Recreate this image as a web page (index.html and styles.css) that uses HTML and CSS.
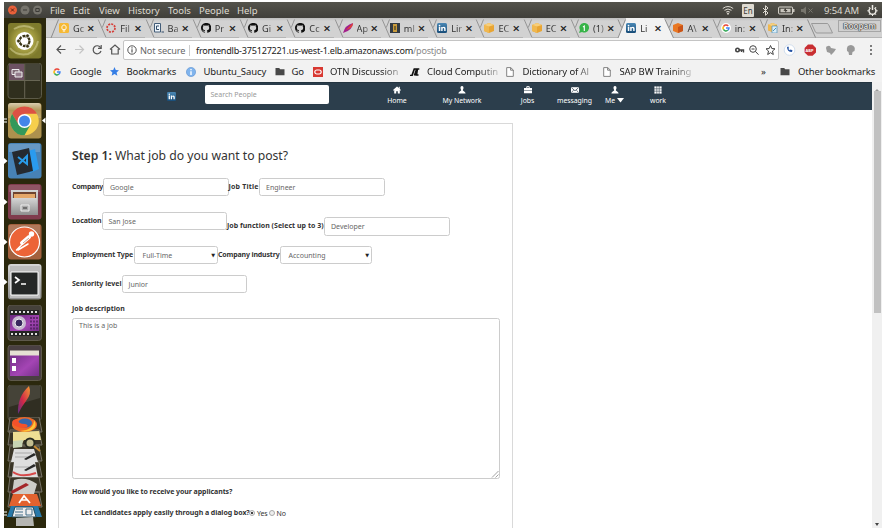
FILE: index.html
```
<!DOCTYPE html>
<html lang="en">
<head>
<meta charset="utf-8">
<title>Post a job</title>
<link rel="stylesheet" href="styles.css">
</head>
<body>
<svg class="defs" width="0" height="0">
  <defs>
    <linearGradient id="gloss" x1="0" y1="0" x2="0" y2="1"><stop offset="0" stop-color="#fff" stop-opacity=".55"/><stop offset=".5" stop-color="#fff" stop-opacity=".05"/><stop offset="1" stop-color="#fff" stop-opacity=".2"/></linearGradient>
    <linearGradient id="silver" x1="0" y1="0" x2="0" y2="1"><stop offset="0" stop-color="#d5d5d5"/><stop offset="1" stop-color="#8e8e8e"/></linearGradient>
    <linearGradient id="purple" x1="0" y1="0" x2="1" y2="1"><stop offset="0" stop-color="#6c2a80"/><stop offset=".6" stop-color="#a445b4"/><stop offset="1" stop-color="#75308a"/></linearGradient>
    <linearGradient id="feather" x1="0" y1="1" x2="1" y2="0"><stop offset="0" stop-color="#5c2f86"/><stop offset=".45" stop-color="#d32847"/><stop offset="1" stop-color="#f39b35"/></linearGradient>
    <linearGradient id="blue" x1="0" y1="0" x2="0" y2="1"><stop offset="0" stop-color="#4a88b5"/><stop offset="1" stop-color="#174c78"/></linearGradient>
    <radialGradient id="olive"><stop offset="0" stop-color="#c8c47a"/><stop offset=".6" stop-color="#a29b41"/><stop offset="1" stop-color="#7e7a2c"/></radialGradient>
    <symbol id="git" viewBox="0 0 16 16"><path fill="#111" d="M8 0C3.58 0 0 3.58 0 8c0 3.54 2.29 6.53 5.47 7.59.4.07.55-.17.55-.38v-1.49c-2.01.37-2.53-.49-2.69-.94-.36-.8-.72-.92-.9-1.1-.3-.28-.1-.55.28-.5.63.08.9.6 1.23 1.02.6 1 1.6.8 2.1.55.08-.52.28-.87.51-1.07-1.78-.2-3.64-.89-3.64-3.95 0-.87.31-1.59.82-2.15-.08-.2-.36-1.02.08-2.12 0 0 .67-.21 2.2.82a7.6 7.6 0 0 1 4 0c1.53-1.04 2.2-.82 2.2-.82.44 1.1.16 1.92.08 2.12.51.56.82 1.27.82 2.15 0 3.07-1.87 3.75-3.65 3.95.29.25.54.73.54 1.48v2.2c0 .21.15.46.55.38A8 8 0 0 0 8 0z"/></symbol>
    <symbol id="in" viewBox="0 0 10 10"><rect width="10" height="10" rx="1.5" fill="url(#blue)"/><path d="M1.8 4v4h1.5V4zM4.2 4v4h1.4V6q0-1 .8-1t.8 1v2h1.4V5.6Q8.600 3.800 7 3.800q-1 0-1.400.8V4z" fill="#fff"/><circle cx="2.550" cy="2.600" r=".85" fill="#fff"/></symbol>
    <symbol id="cube" viewBox="0 0 10 10"><path d="M0 2 5 0l5 2v6L5 10 0 8z" fill="#e8a534"/><path d="M0 2 5 3.500V10L0 8z" fill="#f0b850"/><path d="M0 2 5 0l5 2-5 1.500z" fill="#f7cf7c"/></symbol>
    <symbol id="g" viewBox="0 0 20 20" fill="none" stroke-width="3.800"><path d="M15.500 5A7.400 7.400 0 0 0 3.700 6.300" stroke="#ea4335"/><path d="M3.700 6.300a7.400 7.400 0 0 0 0 7.400" stroke="#fbbc05"/><path d="M3.700 13.700a7.400 7.400 0 0 0 11 2" stroke="#34a853"/><path d="M14.700 15.700A7.400 7.400 0 0 0 17.400 10H10" stroke="#4285f4"/></symbol>
    <symbol id="slant" viewBox="0 0 11 20"><path d="M1.500 2.500 9.500 20H0V2.500z" fill="#d2d2d2"/><path d="M1.200 1.500 5.300 11 9 19.500M8.500 1.500 5.300 9.500" fill="none" stroke="#8d8d8d" stroke-width=".9"/></symbol>
    <symbol id="page" viewBox="0 0 8 10"><path d="M.7.6h4L7.300 3v6.400H.7zM4.600.6V3.200h2.700" fill="#fff" stroke="#777" stroke-width=".9"/></symbol>
    <symbol id="folder" viewBox="0 0 10 9"><path d="M.5 1h3.700l1 1.200h4.300v6H.5z" fill="#484848"/></symbol>
    <symbol id="person" viewBox="0 0 10 10"><path d="M5 0C3.300 0 3 1.200 3.200 2.800c.1 1.200.7 1.700.8 2.500C4 6.500.8 6.500.5 9.500h9C9.200 6.500 6 6.500 6 5.300c.1-.8.700-1.300.8-2.500C7 1.200 6.700 0 5 0z" fill="#fff"/></symbol>
  </defs>
</svg>
<div class="desktop">
  <header class="menubar">
    <svg class="winbtns" width="44" height="16" viewBox="0 0 44 16"><circle cx="8.500" cy="8" r="4.500" fill="#e8603a"/><path d="m7 6.500 3 3m0-3-3 3" stroke="#5b2415"/><circle cx="21" cy="8" r="4.500" fill="#76746c"/><path d="M19 8h4" stroke="#3c3b37"/><circle cx="33.500" cy="8" r="4.500" fill="#76746c"/><path d="M31.800 6.500h3.400v3h-3.400z" fill="none" stroke="#3c3b37"/></svg>
    <nav class="menus"><span class="m1">File</span><span class="m2">Edit</span><span class="m3">View</span><span class="m4">History</span><span class="m5">Tools</span><span class="m6">People</span><span>Help</span></nav>
    <div class="tray">
      <svg width="12" height="10" viewBox="0 0 12 10" fill="none" stroke="#dedbd3"><path d="M.8 3.500q5.200-4 10.400 0M2.500 5.300q3.500-2.600 7 0M4.200 7.100q1.800-1.300 3.600 0"/><circle cx="6" cy="8.700" r=".6" fill="#dedbd3"/></svg>
      <b class="lang">En</b>
      <svg class="bt" width="7" height="11" viewBox="0 0 7 11"><path d="m1 3 5 5-2.500 2.300V.7L6 3 1 8" fill="none" stroke="#dedbd3"/></svg>
      <svg class="bat" width="17" height="9" viewBox="0 0 17 9"><rect x=".6" y="1" width="14" height="7" rx="1" fill="none" stroke="#dedbd3"/><path d="M2.500 2.800h10v3.400h-10zM15 3h1.500v3H15z" fill="#c9c6be"/><path d="m7.500 2-2 2.800h2L7 7l2.500-3H8z" fill="#33312c"/></svg>
      <svg class="vol" width="12" height="9" viewBox="0 0 12 9"><path d="M0 3h2l3-2.500v8L2 6H0z" fill="#77756d"/><path d="m7.500 2.500 4 4m0-4-4 4" stroke="#77756d"/></svg>
      <span class="clock">9:54 AM</span>
      <svg class="gear" width="11" height="11" viewBox="0 0 11 11" fill="none" stroke="#eeece6"><path d="M3.500 3a3.500 3.500 0 1 0 4 0M5.500 0v5" stroke-width="1.500"/><path d="M.3 5.800h1.500m7.400 0h1.500M1.800 2l1 1m6.400-1-1 1M2 9.800l1-1m6 1-1-1M5.500 9.500V11"/></svg>
    </div>
  </header>
  <div class="main">
    <aside class="dock">
      <svg class="tile" viewBox="0 0 42 36"><rect x="4" width="33.500" height="35.500" rx="3" fill="url(#olive)"/><path d="M6 25Q12 33 24 31Q32 28 34 18M10 6Q20 0 30 6" stroke="#ddd9a2" stroke-width="2" fill="none" opacity=".5"/><circle cx="20.500" cy="18" r="9" fill="#fff"/><circle cx="20.500" cy="18" r="5" fill="none" stroke="#3a3516" stroke-width="2.300" stroke-dasharray="9.300 1.170"/><g fill="#3a3516" stroke="#fff" stroke-width=".7"><circle cx="14.500" cy="18" r="1.900"/><circle cx="23.500" cy="12.800" r="1.900"/><circle cx="23.500" cy="23.200" r="1.900"/></g></svg>
      <svg class="tile" viewBox="0 0 42 36"><rect x="4" width="33.500" height="35.500" rx="3" fill="#302f1e" stroke="#5c5a48"/><path d="M5 1h15v16H5z" fill="#6d5262"/><path d="M21 1h15v16H21z" fill="#454438"/><path d="M20.700 1v34M5 17.500h31" stroke="#686654"/><path d="M8 6.500h7v5H8z" fill="#806b76" stroke="#eee"/><path d="M11 9h7v5h-7z" fill="#967e8e" stroke="#eee"/></svg>
      <svg class="tile" viewBox="0 0 42 36"><rect x="4" width="33.500" height="35.500" rx="3" fill="#ad914e"/><path d="M4 3q0-3 3-3h27q3 0 3 3v12H4z" fill="url(#gloss)"/><circle cx="20.500" cy="18" r="14.300" fill="#f6cf4c"/><path d="M8.100 10.800A14.300 14.300 0 0 1 32.900 10.800H20.500L14.300 21.600z" fill="#dc5144"/><path d="M8.100 10.800 14.500 21.600 26.600 21.600 20.500 32.300A14.300 14.300 0 0 1 8.100 10.800z" fill="#34985a"/><circle cx="20.500" cy="18" r="7" fill="#fff"/><circle cx="20.500" cy="18" r="5.500" fill="#4285e8"/><path d="M0 16h3M0 19h3" stroke="#fff"/><path d="m41.500 14.500-3.500 3 3.500 3z" fill="#fff"/></svg>
      <svg class="tile" viewBox="0 0 42 36"><rect x="4" width="33.500" height="35.500" rx="3" fill="#4782b5"/><path d="M5 1h31v8H5z" fill="#fff" opacity=".18"/><path d="m24 8 7-2 4 20-9 4z" fill="#2a9bee"/><path d="m8 9 17-4 4 23-16 4z" fill="#252a30"/><path d="m14 14 9 7v-8l-8 8" fill="none" stroke="#299be8" stroke-width="2"/><path d="m0 15 3.500 3L0 21z" fill="#fff"/></svg>
      <svg class="tile" viewBox="0 0 42 36"><rect x="4" width="33.500" height="35.500" rx="3" fill="#803c4d"/><path d="M5 1h31v7H5z" fill="#fff" opacity=".13"/><path d="M7 6h27v25H7z" fill="url(#silver)"/><path d="M9 8h23v7H9z" fill="#6f4430"/><path d="M10 10h21v5H10z" fill="#e4a769"/><path d="M8 14h25v17H8z" fill="url(#silver)"/><path d="M17 21h8v6h-8z" fill="#aaa" stroke="#eee"/><path d="M19 24h4" stroke="#333"/><path d="m0 15 3.500 3L0 21z" fill="#fff"/></svg>
      <svg class="tile" viewBox="0 0 42 36"><rect x="4" width="33.500" height="35.500" rx="3" fill="#a3613e"/><path d="M5 1h31v9H5z" fill="#fff" opacity=".15"/><circle cx="20.500" cy="18" r="15" fill="#ec6437" stroke="#fff" stroke-width="1.200"/><path d="m18 19 7-6" stroke="#fff" stroke-width="4" stroke-linecap="round"/><path d="m12.500 26 7-7M14 26l10-6" stroke="#fff" stroke-width="1.500" stroke-linecap="round"/><circle cx="27.500" cy="10" r="2.700" fill="#fff"/><path d="m19 19 6-5" stroke="#c9a394"/><path d="m0 15 3.500 3L0 21z" fill="#fff"/></svg>
      <svg class="tile" viewBox="0 0 42 36"><rect x="4" width="33.500" height="35.500" rx="3" fill="url(#silver)"/><path d="M6 2h30v32H6z" fill="#bcbcbc"/><path d="M7 8h27v23H7z" fill="#252827" stroke="#fff"/><path d="m11 13 4 3-4 3M17 20h5" fill="none" stroke="#fff" stroke-width="1.700"/><path d="m0 15 3.500 3L0 21z" fill="#fff"/></svg>
      <svg class="tile" viewBox="0 0 42 36"><rect x="4" width="33.500" height="35.500" rx="3" fill="#45413a" stroke="#5e594b"/><path d="M6 5h29v26H6z" fill="#232323"/><path d="M7 7h27M7 29h27" stroke="#ddd" stroke-width="2" stroke-dasharray="2 2"/><path d="M6 10h29v16H6z" fill="url(#purple)"/><circle cx="15" cy="18" r="7" fill="#c7b7cf"/><circle cx="15" cy="18" r="4" fill="#39285d" stroke="#eee"/><path d="M27 12v13m3-13v13m3-13v13" stroke="#4d1e5c" stroke-dasharray="2 1.500" stroke-width="1.500"/></svg>
      <svg class="tile" viewBox="0 0 42 36"><rect x="4" width="33.500" height="35.500" rx="3" fill="#493f41" stroke="#5e594b"/><path d="M6 6h29v25H6z" fill="url(#purple)"/><path d="M6 5.500h29v5H6z" fill="#e5e0d3"/><path d="M8 13h4v5H8zM8 21h4v5H8z" fill="#fff"/></svg>
      <svg class="tile" viewBox="0 0 42 36"><rect x="4" width="33.500" height="35.500" rx="3" fill="#302e22" stroke="#504f3e"/><path d="M5 1h31v12L5 22z" fill="#fff" opacity=".1"/><path d="M14 29Q13 12 25 1q3 8-3 15-4 5-8 13z" fill="url(#feather)"/></svg>
      <svg class="stack" viewBox="0 0 42 109"><g stroke="#777366" fill="#3a3527"><path d="M6 0h29l3 15H4zM6 13h29l3 15H4zM6 29h29l3 15H4zM6 45h29l3 15H4zM6 60h29l3 15H4zM6 75h29l3 15H4z"/></g><path d="m9 15 26-1 2 9H20l-3 5-8-1z" fill="#efdf94"/><ellipse cx="20.500" cy="7.500" rx="12.500" ry="7.500" fill="#ee6828"/><ellipse cx="21" cy="6" rx="7" ry="4.500" fill="#3467ac"/><path d="M8 5q2-4 6-2 0 4 7 4 4 1 2 3-5 2-9 0Q9 9 8 5z" fill="#f3522b"/><path d="M30 3q4 6-2 10-6 3-12 1 14-1 14-11z" fill="#ffc536"/><path d="m9 24 10-1-1 7-9 1z" fill="#c7d4b3"/><circle cx="26" cy="26" r="4.500" fill="#c3bd90" stroke="#292c21" stroke-width="2"/><path d="m30 29 6 5" stroke="#c38a35" stroke-width="2"/><path d="M10 32h20l4 13H7zM10 45h21l3 15H8z" fill="#dedede"/><path d="M11 36h17M11 40h15M11 50h14" stroke="#aaa"/><path d="m20 42 10-6 2 2-10 5zM20 53l10-6 2 2-10 5z" fill="#292929"/><path d="M9 55q8 6 23 1" fill="none" stroke="#d64848" stroke-width="2"/><path d="M10 63q12-4 23 4l-3 10H8z" fill="#cdccc8"/><path d="m7 74 15-8 3 2-17 9z" fill="#a42629"/><path d="M9 77h24l4 12H5z" fill="#e2622f"/><path d="m15 86 5-7 6 7m-9-3h7" stroke="#fff" fill="none" stroke-width="1.700"/><path d="M7 89h27l4 11H3z" fill="#2979a9"/><path d="M11 90h18l3 10H8z" fill="#eee" stroke="#244b61"/><path d="M12 92h7m-8 3h8m-8 3h8M22 92h6v6h-6z" stroke="#416d87" fill="none"/><path d="m12 101 17-1 1 9H12z" fill="#b6b6b2"/><path d="M0 95h3M0 98h3" stroke="#fff"/></svg>
    </aside>
    <section class="browser">
      <div class="tabs">
        <div class="tab first"><svg class="sl" viewBox="0 0 11 20"><path d="M1 20 8.500 1.500" stroke="#8d8d8d"/></svg><svg class="fav" viewBox="0 0 10 10"><rect width="10" height="10" rx="1.500" fill="#f6b934"/><path d="M3.800 6.700C2 5 3 2 5 2s3 3 1.200 4.700zM3.800 8h2.400" fill="none" stroke="#fff"/></svg><span>Gc</span><i>×</i></div>
        <div class="tab"><svg class="sl"><use href="#slant"/></svg><svg class="fav" viewBox="0 0 10 10"><circle cx="5" cy="5" r="4" fill="none" stroke="#d63e38" stroke-width="1.700" stroke-dasharray="2 1.100"/></svg><span>Fil</span><i>×</i></div>
        <div class="tab"><svg class="sl"><use href="#slant"/></svg><svg class="fav" viewBox="0 0 10 10"><path d="M.5.500h6v8.500h-6z" fill="#edf4fa" stroke="#425c78"/><path d="M5 3H2.500v3.500H5M7.500 9H10" fill="none" stroke="#334d6a"/></svg><span>Ba</span><i>×</i></div>
        <div class="tab"><svg class="sl"><use href="#slant"/></svg><svg class="fav"><use href="#git"/></svg><span>Pr</span><i>×</i></div>
        <div class="tab"><svg class="sl"><use href="#slant"/></svg><svg class="fav"><use href="#git"/></svg><span>Gi</span><i>×</i></div>
        <div class="tab"><svg class="sl"><use href="#slant"/></svg><svg class="fav"><use href="#git"/></svg><span>Cc</span><i>×</i></div>
        <div class="tab"><svg class="sl"><use href="#slant"/></svg><svg class="fav" viewBox="0 0 10 10"><path d="M0 10Q2 2 10 0 10 7 0 10" fill="#a3218b"/><path d="M3 7 10 0q0 5-7 7" fill="#e5482f"/></svg><span>Ap</span><i>×</i></div>
        <div class="tab"><svg class="sl"><use href="#slant"/></svg><svg class="fav" viewBox="0 0 10 10"><path d="M0 0h10v10H0z" fill="#333b43"/><path d="M3 1h4v8H3z" fill="#c99b3d"/><path d="M4 3h2v4H4z" fill="#776229"/></svg><span>ml</span><i>×</i></div>
        <div class="tab"><svg class="sl"><use href="#slant"/></svg><svg class="fav"><use href="#in"/></svg><span>Lir</span><i>×</i></div>
        <div class="tab"><svg class="sl"><use href="#slant"/></svg><svg class="fav"><use href="#cube"/></svg><span>EC</span><i>×</i></div>
        <div class="tab"><svg class="sl"><use href="#slant"/></svg><svg class="fav"><use href="#cube"/></svg><span>EC</span><i>×</i></div>
        <div class="tab"><svg class="sl"><use href="#slant"/></svg><svg class="fav" viewBox="0 0 10 10"><path d="m0 10 1-3a4.800 4.800 0 1 1 2 2z" fill="#38b449"/><path d="m4 4 1.300-1V8" fill="none" stroke="#fff" stroke-width="1.100"/></svg><span>(1)</span><i>×</i></div>
        <div class="tab active"><svg class="sl" viewBox="0 0 11 20"><path d="M1 20 8.500 1.500H11V20z" fill="#f2f2f2"/><path d="M1 20 8.500 1.500M1 1.500l3.500 8" fill="none" stroke="#8d8d8d"/></svg><svg class="fav"><use href="#in"/></svg><span>Li</span><i>×</i></div>
        <div class="tab"><svg class="sl" viewBox="0 0 11 20"><path d="M0 1.500h1L9.500 20H0z" fill="#f2f2f2"/><path d="m1 1.500 8.500 18.500M8.500 1.500 5.300 9.500" fill="none" stroke="#8d8d8d"/></svg><svg class="fav" viewBox="0 0 10 10"><path d="m0 2 5-2 5 2v6l-5 2-5-2z" fill="#e97824"/><path d="m5 4 5-2v6l-5 2z" fill="#c95418"/></svg><span>A\</span><i>×</i></div>
        <div class="tab"><svg class="sl"><use href="#slant"/></svg><svg class="fav" viewBox="0 0 10 10"><circle cx="5" cy="5" r="5" fill="#fff"/><use href="#g" x="1" y="1" width="8" height="8"/></svg><span>in:</span><i>×</i></div>
        <div class="tab"><svg class="sl"><use href="#slant"/></svg><svg class="fav" viewBox="0 0 10 10"><use href="#cube" width="9" height="9"/><path d="M4 3h5v7H4z" fill="#d9edf8" stroke="#4e91b9" stroke-width=".7"/><path d="m5 8 3-3" stroke="#4e91b9"/></svg><span>In:</span><i>×</i></div>
        <svg class="newtab" width="32" height="20" viewBox="0 0 32 20"><path d="M1.500 1.500 9.500 19.500" stroke="#8d8d8d"/><path d="M5.500 5.500h15.500q1 0 1.500 1l4 8.500H11q-1 0-1.600-1z" fill="#cfcfcf" stroke="#999"/></svg>
        <div class="profile">Roopam</div>
      </div>
      <div class="toolbar">
        <svg class="navbtns" width="69" height="24" viewBox="0 0 69 24" fill="none" stroke="#555" stroke-width="1.200"><path d="M11.500 11.500h-8.500m4-4-4 4 4 4"/><path d="M21 11.500h8.500m-4-4 4 4-4 4" stroke="#c5c5c5"/><path d="M46.500 9.500A4 4 0 1 0 47 13M47.200 7v3.300H44"/><path d="m56 11.500 5-4.500 5 4.500M57.700 11v5h6.500v-5"/></svg>
        <div class="omni">
          <svg width="10" height="10" viewBox="0 0 10 10"><circle cx="5" cy="5" r="4.200" fill="none" stroke="#555"/><path d="M5 4.300v3.200M5 2.300v1.200" stroke="#555" stroke-width="1.200"/></svg>
          <span class="sec">Not secure</span><span class="url">frontendlb-375127221.us-west-1.elb.amazonaws.com<em>/postjob</em></span>
          <svg class="omniright" width="44" height="12" viewBox="0 0 44 12" fill="none" stroke="#444"><circle cx="5.500" cy="6" r="1.700" stroke-width="1.600"/><path d="M7 6h4.500v2.500M9.500 6v2" stroke-width="1.400"/><circle cx="21" cy="5" r="3.300"/><path d="M19.500 5h3m1 2.500 3 3.200"/><path d="m38.500 1.500 1.300 3 3.200.3-2.500 2.200.8 3.500-2.800-1.800-2.800 1.800.8-3.500L34 4.800l3.200-.3z"/></svg>
        </div>
        <svg class="ext" width="96" height="14" viewBox="0 0 96 14"><circle cx="7.500" cy="7" r="5.300" fill="#fff" stroke="#d2dfef"/><path d="M5 4q0 5 5 5l.5-1.700-2-.7-.7.7L6.300 6l.7-.8-.6-1.700z" fill="#2452a3"/><path d="M26 1.500h4.600L34 5v4.400l-3.400 3.400H26l-3.400-3.400V5z" fill="#c82e32"/><text x="23.600" y="9.100" class="abp">ABP</text><path d="M44 5q0-2 2-2 2-1 3 2l5 1-2 3-3 3-1-2-3-1z" fill="#999"/><path d="M65 8q-1-6 4-6 5 1 3.500 6l-2 1-.5 3h-3l-.5-3z" fill="#999"/><g fill="#555"><circle cx="89" cy="3" r="1"/><circle cx="89" cy="7" r="1"/><circle cx="89" cy="11" r="1"/></g></svg>
      </div>
      <div class="bookmarks">
        <div class="bm b1"><svg width="8" height="8"><use href="#g"/></svg><span>Google</span></div>
        <div class="bm b2"><svg width="9" height="9" viewBox="0 0 10 10"><path d="m5 0 1.400 3.300L10 3.700 7.300 6l.9 3.700L5 7.800 1.800 9.700 2.700 6 0 3.700l3.600-.4z" fill="#367ee5"/></svg><span>Bookmarks</span></div>
        <div class="bm b3"><svg width="10" height="10" viewBox="0 0 10 10"><circle cx="5" cy="5" r="4.600" fill="#80b4ed" stroke="#5c92d1" stroke-width=".6"/><path d="M5 4.200V8M5 1.900v1.300" stroke="#fff" stroke-width="1.400"/></svg><span>Ubuntu_Saucy</span></div>
        <div class="bm b4"><svg width="10" height="9"><use href="#folder"/></svg><span>Go</span></div>
        <div class="bm b5"><svg width="10" height="10" viewBox="0 0 10 10"><path d="M0 0h10v10H0z" fill="#d83831"/><rect x="1.800" y="3" width="6.400" height="4" rx="2" fill="none" stroke="#fff" stroke-width="1.200"/></svg><span class="fade">OTN Discussion</span></div>
        <div class="bm b6"><svg width="10" height="8" viewBox="0 0 10 8"><path d="M0 7.500h2L4.300 1h5M4.500 7.500 6.500 1.500M7.300 1.500 6.500 7h2" fill="none" stroke="#111" stroke-width="1.700"/></svg><span class="fade">Cloud Computin</span></div>
        <div class="bm b7"><svg width="8" height="10"><use href="#page"/></svg><span class="fade">Dictionary of Al</span></div>
        <div class="bm b8"><svg width="8" height="10"><use href="#page"/></svg><span class="fade">SAP BW Training</span></div>
        <div class="other"><span class="more">»</span><svg width="10" height="9"><use href="#folder"/></svg><span class="ob">Other bookmarks</span></div>
      </div>
      <div class="viewport">
        <main class="page">
          <nav class="sitenav">
            <svg class="logo" width="9" height="9"><use href="#in"/></svg>
            <div class="search">Search People</div>
            <div class="links">
              <a><svg viewBox="0 0 10 10"><path d="M5 .5 0 5l.8.8L1.500 5v4.500H4V6.500h2v3h2.500V5l.7.800L10 5 8.500 3.600V1H7.300v1.600z" fill="#fff"/></svg>Home</a>
              <a><svg><use href="#person"/></svg>My Network</a>
              <a><svg viewBox="0 0 10 10"><path d="M3.500 2.500V.8h3v1.700" fill="none" stroke="#fff" stroke-width="1.200"/><path d="M0 2.500h10v2.800H0zM0 6h10v3H0z" fill="#fff"/></svg>Jobs</a>
              <a><svg viewBox="0 0 10 10"><path d="M0 1.500h10v7H0z" fill="#fff"/><path d="m.5 2 4.500 4 4.500-4M.5 8l3-3m6 3-3-3" fill="none" stroke="#2c3e4c" stroke-width=".9"/></svg>messaging</a>
              <a><svg><use href="#person"/></svg><span>Me <svg class="caret" viewBox="0 0 7 5"><path d="M0 0h7L3.500 4.500z" fill="#fff"/></svg></span></a>
              <a><svg viewBox="0 0 10 10"><path d="M.5.500h9v9h-9z" fill="#fff"/><path d="M3.500 0v10M6.500 0v10M0 3.500h10M0 6.500h10" stroke="#2c3e4c" stroke-width=".7"/></svg>work</a>
            </div>
          </nav>
          <form class="card">
            <h1><b>Step 1:</b> What job do you want to post?</h1>
            <div class="row r1"><label class="l-company">Company</label><div class="field">Google</div><label class="l-title">Job Title</label><div class="field">Engineer</div></div>
            <div class="row r2"><label class="l-location">Location</label><div class="field">San Jose</div><label class="l-function low">Job function (Select up to 3)</label><div class="field low">Developer</div></div>
            <div class="row r3"><label class="l-type">Employment Type</label><div class="field select s1">Full-Time<i>▼</i></div><label class="l-industry">Company industry</label><div class="field select s2">Accounting<i>▼</i></div></div>
            <div class="row r4"><label class="l-level">Seniority level</label><div class="field">Junior</div></div>
            <label class="desc">Job description</label>
            <div class="area">This is a job<svg width="8" height="8" viewBox="0 0 8 8"><path d="m1 7.500 6.500-6.500M4.500 7.500l3-3" stroke="#999" stroke-width=".9"/></svg></div>
            <label class="how">How would you like to receive your applicants?</label>
            <div class="choice"><label>Let candidates apply easily through a dialog box?</label><span class="radio on"></span><span class="yes">Yes</span><span class="radio"></span><span class="no">No</span></div>
          </form>
        </main>
        <div class="scroll"><span class="up"></span><span class="thumb"></span><span class="down"></span></div>
      </div>
    </section>
  </div>
</div>
</body>
</html>
```
FILE: styles.css
```
* { box-sizing: border-box; }
html, body { margin: 0; background: #fff; }
body { width: 888px; height: 532px; overflow: hidden; padding: 2px 6px 5px 4px; font-family: "Noto Sans", "Open Sans", sans-serif; color: #333; }
svg { display: block; flex: none; }
.defs { position: absolute; }
span, label, a { white-space: nowrap; }
.desktop { width: 878px; height: 525.500px; display: flex; flex-direction: column; overflow: hidden; }
.menubar { height: 16px; flex: none; display: flex; align-items: center; background: linear-gradient(#54534c, #403f3a); color: #dfdbd2; font-size: 9.500px; }
.menus { display: flex; margin-left: 2px; letter-spacing: -.05px; }
.m1 { width: 23px; } .m2 { width: 26px; } .m3 { width: 29px; } .m4 { width: 40px; } .m5 { width: 31px; } .m6 { width: 38px; }
.tray { margin-left: auto; display: flex; align-items: center; padding-right: 4px; }
.lang { background: #dfdbd2; color: #3c3b37; border-radius: 1px; width: 12px; height: 13px; margin-left: 8px; font-size: 8px; line-height: 13px; text-align: center; font-weight: 400; }
.bt { margin-left: 8px; } .bat { margin-left: 9px; } .vol { margin-left: 6px; }
.clock { margin-left: 11px; width: 35px; letter-spacing: -.15px; } .gear { margin-left: 8px; }
.main { display: flex; flex: 1; min-height: 0; }
.dock { width: 42px; flex: none; background: #2b280d; padding-top: 4.500px; display: flex; flex-direction: column; gap: 4.300px; overflow: hidden; }
.tile { width: 42px; height: 36px; flex: none; }
.stack { width: 42px; height: 109px; margin-top: -8px; }
.browser { flex: 1; min-width: 0; display: flex; flex-direction: column; background: #f2f2f2; }
.tabs { height: 20px; flex: none; display: flex; background: linear-gradient(#bdbdbd 0, #d2d2d2 3px); padding-left: 4px; border-bottom: 1px solid #b5b5b5; }
.tab { width: 47.270px; height: 20px; flex: none; display: flex; align-items: center; font-size: 9.200px; color: #333; }
.sl { width: 11px; height: 20px; margin-right: -2px; }
.fav { width: 10px; height: 10px; }
.tab span { width: 13px; margin-left: 4px; -webkit-mask-image: linear-gradient(90deg, #000 45%, rgba(0,0,0,.25)); }
.tab i { font: 600 13px/18px "Noto Sans", sans-serif; color: #222; margin-left: 1px; }
.active { background: linear-gradient(90deg, transparent 9px, #f2f2f2 9px); }
.profile { margin-left: auto; height: 12px; width: 43px; border: 1px solid #a6a6a6; background: #d0d0d0; font-size: 8px; font-weight: 700; line-height: 10px; text-align: center; color: #d4d4d4; text-shadow: 0 0 1px #333, 0 0 1px #333, 0 0 1px #333; margin-top: 2px; margin-right: 1px; }
.toolbar { height: 24px; flex: none; display: flex; align-items: center; }
.navbtns { margin-left: 8px; }
.omni { width: 656px; height: 20px; background: #fff; border: 1px solid #c4c4c4; border-radius: 2px; display: flex; align-items: center; padding-left: 3px; font-size: 9.200px; }
.sec { margin-left: 3px; width: 50px; border-right: 1px solid #ccc; line-height: 11px; color: #666; letter-spacing: -.15px; }
.url { margin-left: 6px; color: #222; font-size: 9.100px; letter-spacing: -.23px; } .url em { font-style: normal; color: #8a8a8a; }
.omniright { margin-left: auto; margin-right: 2px; }
.ext { margin-left: 3px; }
.abp { font: 700 4px "Noto Sans", sans-serif; fill: #fff; }
.bookmarks { height: 19.500px; flex: none; display: flex; align-items: center; padding-left: 7px; font-size: 9.500px; color: #222; }
.bm { display: flex; align-items: center; flex: none; } .bm span { margin-left: 9px; letter-spacing: -.1px; }
.b1 { width: 57px; } .b2 { width: 76px; } .b3 { width: 88.500px; } .b4 { width: 38px; } .b5 { width: 97px; } .b6 { width: 96.500px; } .b7 { width: 97px; } .b8 { width: 90px; }
.bm .fade { width: 72px; margin-left: 7.500px; -webkit-mask-image: linear-gradient(90deg, #000 72%, rgba(0,0,0,.2)); }
.bm.b2 span, .bm.b3 span { margin-left: 7.500px; } .bm.b4 span { margin-left: 7px; }
.bm.b7 .fade, .bm.b8 .fade { margin-left: 8.500px; }
.other { margin-left: auto; display: flex; align-items: center; padding-right: 7px; }
.more { width: 19px; } .ob { margin-left: 8px; width: 77px; letter-spacing: -.1px; }
.viewport { flex: 1; min-height: 0; display: flex; background: #fff; }
.page { width: 826px; overflow: hidden; }
.sitenav { height: 28px; background: #2c3e4c; color: #fff; display: flex; align-items: flex-start; border-top: 1px solid #243440; }
.logo { margin: 9.500px 0 0 121px; }
.search { width: 124.500px; height: 18.500px; margin: 2.500px 0 0 28.500px; border-radius: 2px; background: #fff; color: #999; font-size: 7px; line-height: 19px; padding-left: 6px; letter-spacing: -.02px; }
.links { display: grid; grid-template-columns: 66px 64px 67px 27px 53px 34px; margin: 3px 0 0 35px; }
.links a { display: flex; flex-direction: column; align-items: center; font-size: 6.900px; line-height: 9px; letter-spacing: -.05px; }
.links a > svg { width: 8px; height: 8px; margin-bottom: 2px; }
.links .caret { display: inline-block; width: 7px; height: 5px; vertical-align: 0; }
.card { width: 455px; height: 430px; margin: 13.500px 0 0 12px; border: 1px solid #d9d9d9; padding: 24.500px 12px 0 13px; }
h1 { margin: 0; font-size: 12.200px; line-height: 14px; font-weight: 400; letter-spacing: -.02px; white-space: nowrap; color: #333; height: 29px; }
h1 b { font-weight: 600; }
.row { display: flex; height: 19px; align-items: flex-start; }
label { font-size: 7px; font-weight: 700; line-height: 18px; letter-spacing: -.08px; flex: none; }
.field { width: 125.500px; height: 18.500px; border: 1px solid #ccc; border-radius: 2.500px; font-size: 7px; line-height: 17px; padding-left: 6px; color: #666; flex: none; }
.low { position: relative; top: 5.500px; }
.r2 { margin-top: 15px; } .r3 { margin-top: 15px; } .r4 { margin-top: 10px; }
.l-company { width: 31px; letter-spacing: -.25px; } .l-title { width: 30.500px; letter-spacing: .2px; } .l-location { width: 29.500px; } .l-function { width: 97px; letter-spacing: .03px; } .l-type { width: 61.500px; } .l-industry { width: 61.500px; letter-spacing: -.15px; } .l-level { width: 49.500px; letter-spacing: 0; }
.select { padding: 0 2px 0 8px; display: flex; justify-content: space-between; } .select i { font: 5px/16px "DejaVu Sans", sans-serif; color: #222; }
.s1 { width: 84.500px; } .s2 { width: 92.500px; }
.desc { display: block; margin-top: 6px; height: 18px; letter-spacing: .03px; }
.area { width: 428px; height: 161.500px; border: 1px solid #ccc; border-radius: 2.500px; font-size: 7px; line-height: 10px; padding: 2.500px 6px; color: #666; position: relative; }
.area svg { position: absolute; right: 0; bottom: 0; }
.how { display: block; margin-top: 4px; height: 21px; letter-spacing: -.07px; }
.choice { display: flex; align-items: center; margin-left: 9px; font-size: 7px; height: 18px; }
.choice label { width: 168px; letter-spacing: -.06px; }
.radio { width: 6px; height: 6px; border: 1px solid #aaa; border-radius: 50%; background: #eee; flex: none; }
.on { background: radial-gradient(#444 40%, #eee 50%); }
.yes { width: 11.500px; margin-left: 2px; letter-spacing: -.2px; } .no { margin-left: 2px; }
.scroll { width: 10px; background: #f0f0f0; display: flex; flex-direction: column; align-items: center; }
.up { border: 2.500px solid transparent; border-bottom-color: #999; margin-top: 2px; height: 7px; }
.thumb { width: 7px; height: 222px; background: #c1c1c1; }
.down { margin-top: auto; margin-bottom: 2px; border: 2.500px solid transparent; border-top: 3px solid #444; border-bottom: 0; }
```
